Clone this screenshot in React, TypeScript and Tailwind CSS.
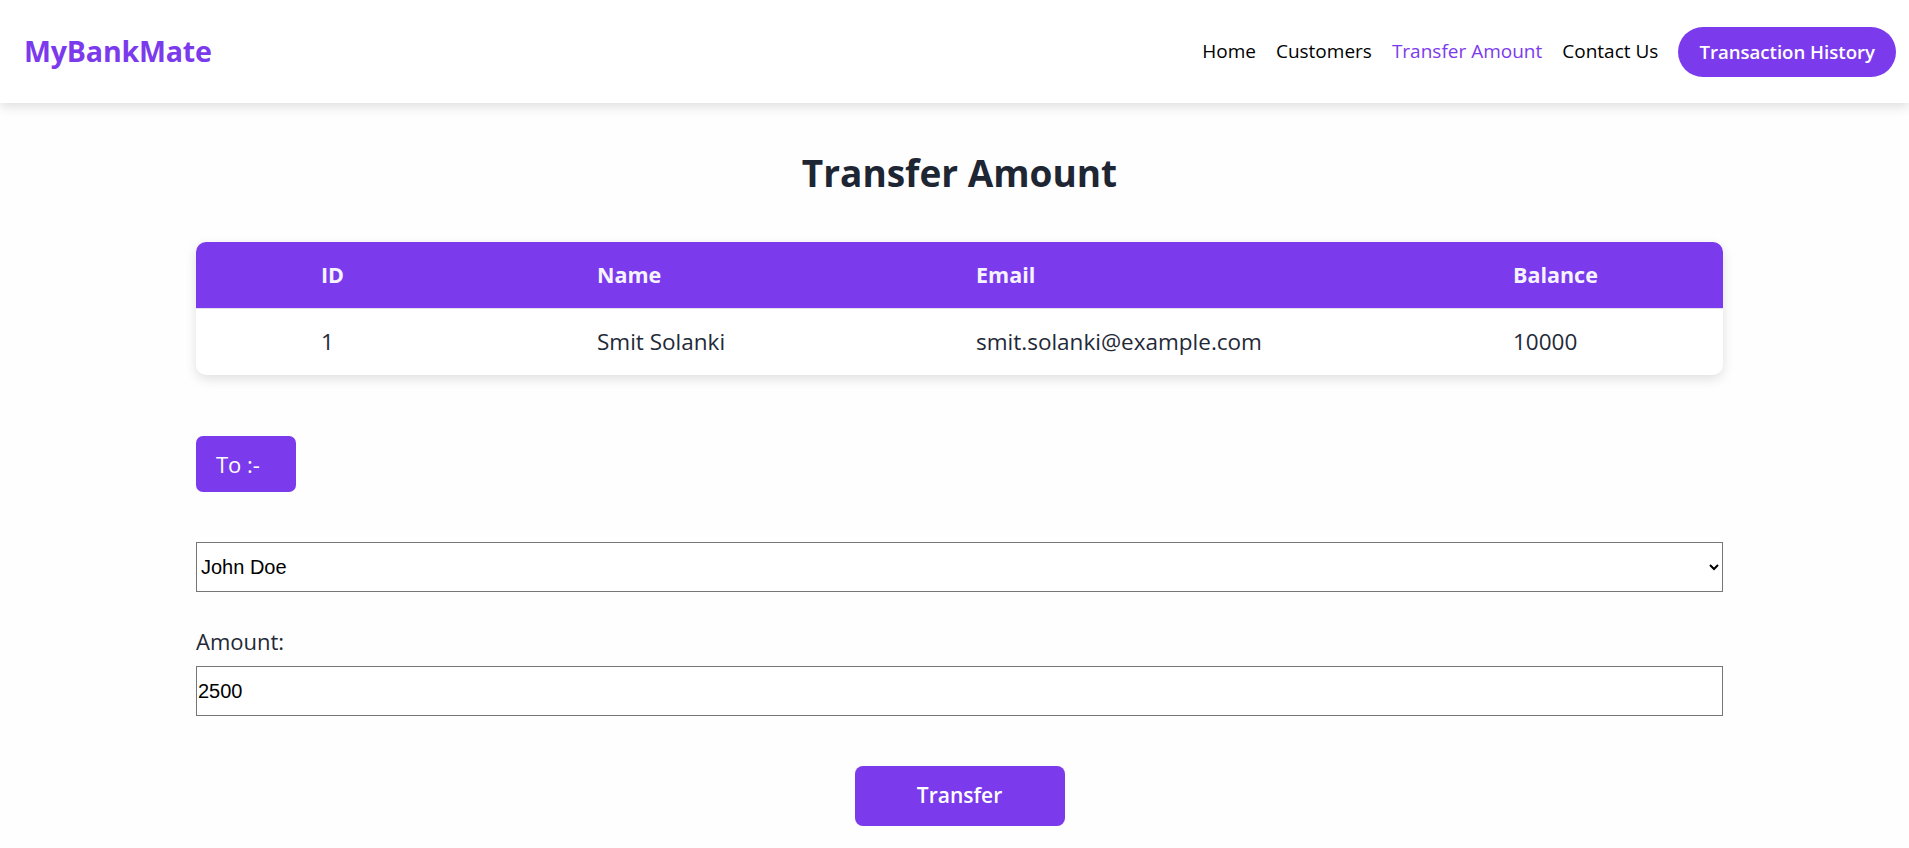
import { useState } from "react"

const links = ["Home", "Customers", "Transfer Amount", "Contact Us"]

const customers = ["John Doe", "Jane Smith", "Rahul Patel", "Priya Shah"]

function Navbar() {
  return (
    <nav className="h-[103px] bg-white shadow-[0_4px_10px_rgba(0,0,0,0.12)] flex items-center justify-between pl-[24px] pr-[13px] relative z-10">
      <span className="text-[28.6px] font-bold text-[#7c3aed] tracking-[-0.2px]">MyBankMate</span>
      <div className="flex items-center gap-[20px]">
        {links.map((l) => (
          <a
            key={l}
            href="#"
            className={`text-[19px] font-medium ${l === "Transfer Amount" ? "text-[#7c3aed]" : "text-black"}`}
          >
            {l}
          </a>
        ))}
        <button className="h-[50px] px-[21px] rounded-full bg-[#7c3aed] text-white text-[18.6px] font-semibold">
          Transaction History
        </button>
      </div>
    </nav>
  )
}

export default function App() {
  const [to, setTo] = useState("John Doe")
  const [amount, setAmount] = useState("2500")

  return (
    <div className="min-h-screen bg-[#fefefe] font-['Open_Sans',sans-serif] text-[#1f2937]">
      <Navbar />
      <main className="pl-[10px]">
        <div className="w-[1527px] mx-auto">
          <h1 className="mt-[46px] text-center text-[37px] leading-[48px] font-bold text-[#1e2533]">Transfer Amount</h1>

          {/* sender */}
          <div className="mt-[45px] rounded-[10px] bg-white shadow-[0_4px_12px_rgba(0,0,0,0.12)] overflow-hidden">
            <div className="grid grid-cols-[276px_379px_537px_1fr] h-[66px] items-center bg-[#7c3aed] text-[#f5f3ff] text-[21.5px] font-bold">
              <div className="pl-[125px]">ID</div>
              <div className="pl-[125px]">Name</div>
              <div className="pl-[125px]">Email</div>
              <div className="pl-[125px]">Balance</div>
            </div>
            <div className="grid grid-cols-[276px_379px_537px_1fr] h-[67px] items-center border-t border-[#e5e0f0] text-[22.5px] text-[#1f2937]">
              <div className="pl-[125px]">1</div>
              <div className="pl-[125px]">Smit Solanki</div>
              <div className="pl-[125px]">smit.solanki@example.com</div>
              <div className="pl-[125px]">10000</div>
            </div>
          </div>

          <div className="mt-[61px] inline-flex items-center h-[56px] w-[100px] pl-[20px] rounded-[7px] bg-[#7c3aed] text-white text-[22px]">
            To :-
          </div>

          <select
            value={to}
            onChange={(e) => setTo(e.target.value)}
            className="mt-[50px] block w-full h-[50px] border border-[#767676] bg-white text-black text-[20px] font-['Liberation_Sans',Arial,sans-serif] pl-0"
          >
            {customers.map((c) => (
              <option key={c}>{c}</option>
            ))}
          </select>

          <label className="block mt-[35px] text-[22px] leading-[28px] text-[#1f2937]">Amount:</label>
          <input
            value={amount}
            onChange={(e) => setAmount(e.target.value)}
            className="mt-[11px] block w-full h-[50px] border border-[#767676] bg-white text-black text-[20px] font-['Liberation_Sans',Arial,sans-serif] px-[1px] outline-none"
          />

          <div className="flex justify-center mt-[50px]">
            <button className="w-[210px] h-[60px] rounded-[8px] bg-[#7c3aed] text-white text-[21px] font-semibold">
              Transfer
            </button>
          </div>
        </div>
      </main>
    </div>
  )
}
